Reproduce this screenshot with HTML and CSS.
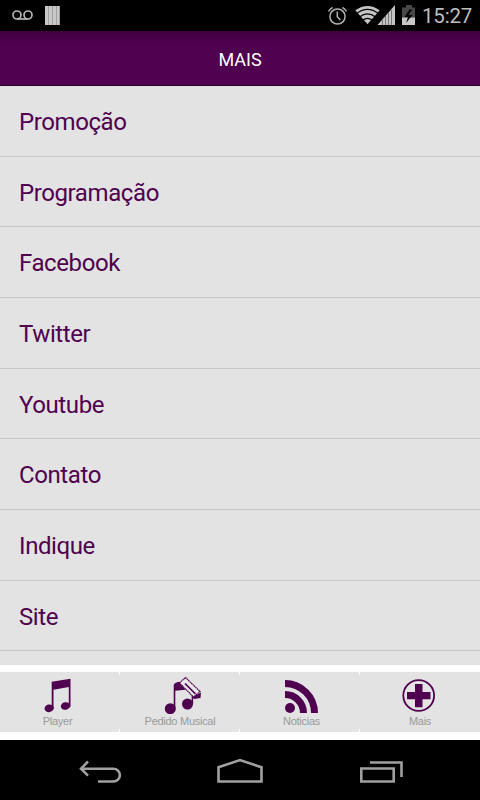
FILE: index.html
```html
<!DOCTYPE html>
<html lang="pt-BR">
	<head>
		<meta charset="utf-8">
		<title>Mais</title>
		<link rel="stylesheet" href="styles.css">
	</head>
	<body>
		<div class="status">
			<svg class="left" width="160" height="31" viewBox="0 0 160 31">
				<g fill="none" stroke="#b4b4b4" stroke-width="1.7">
					<circle cx="17" cy="15" r="4"/>
					<circle cx="28" cy="15" r="4"/>
					<path d="M17 19h11"/>
				</g>
				<path fill="#a0a0a0" d="M45 6h15v19H45z"/>
				<path fill="#c8c8c8" d="M45 6h3v19h-3zM49 6h3v19h-3zM53 6h3v19h-3zM57 6h2v19h-2z"/>
			</svg>
			<svg width="110" height="31" viewBox="310 0 110 31">
				<g fill="none" stroke="#b0b0b0" stroke-width="1.5">
					<circle cx="337.5" cy="16.5" r="7.6"/>
					<path d="M337.3 11.5v5.2l3 3.3M328.5 11.5q1.3-2.5 4-4M346.5 11.5q-1.3-2.5-4-4"/>
				</g>
				<!-- wifi -->
				<path fill="#c4c4c4" d="M367.5 24.2L355.3 10.3Q367.5 1.5 379.7 10.3z"/>
				<path fill="none" stroke="#000" stroke-width="1.2" d="M356.5 13.6q11-8.6 22 0M359.5 16.9q8-6 16 0M362.8 20q4.7-3.4 9.4 0"/>
				<!-- signal -->
				<path fill="#c4c4c4" d="M395 5v20h-17.5z"/>
				<path stroke="#777" stroke-width="1" d="M382.5 20v5M385.5 16v9M388.5 13v12M391.5 10v15"/>
				<!-- battery -->
				<path fill="#484848" d="M406 5h6v2.5h3v10h-13v-10h4z"/>
				<path fill="#c8c8c8" d="M402 17.5h13V25h-13z"/>
				<path fill="#000" d="M409.5 9.5l-5 7.5h3.5l-2 6 6.5-8h-4l3.5-5.5z"/>
			</svg>
			<span class="time">15:27</span>
		</div>
		<div class="header">MAIS</div>
		<ul class="list">
			<li>Promoção</li>
			<li>Programação</li>
			<li>Facebook</li>
			<li>Twitter</li>
			<li>Youtube</li>
			<li>Contato</li>
			<li>Indique</li>
			<li>Site</li>
		</ul>
		<div class="tabs">
			<div class="tab">
				<svg width="120" height="42" viewBox="0 672 120 42">
					<path fill="#4f004f" d="M51.7 681.7l18.8-3v28h-1.7V687l-15.3 2.7v18.5h-1.8z"/>
					<ellipse cx="49.2" cy="708.3" rx="4.7" ry="3.8" transform="rotate(-10 49.2 708.3)" fill="#4f004f"/>
					<ellipse cx="65.5" cy="706" rx="4.7" ry="3.8" transform="rotate(-10 65.5 706)" fill="#4f004f"/>
				</svg>
				<span>Player</span>
			</div>
			<div class="tab">
				<svg width="120" height="42" viewBox="120 672 120 42">
					<path fill="#4f004f" d="M173.7 708v-23q.5-2.5 5.8-3.3l6 8-10.2 1V708z"/>
					<path stroke="#4f004f" stroke-width="1.5" d="M192.4 695v9"/>
					<circle cx="170.3" cy="708.7" r="5.5" fill="#4f004f"/>
					<circle cx="187.5" cy="704" r="5.5" fill="#4f004f"/>
					<path fill="#4f004f" d="M201 692.5l-.5 5.500-6.500 1-2-2z"/>
					<path fill="#e9e9e9" stroke="#4f004f" stroke-width="1.2" stroke-dasharray="1.5 .5" d="M179.5 683l6-5.500 14.500 14-6.500 5.500z"/>
					<path fill="none" stroke="#4f004f" stroke-width="1.7" d="M185 683.5l10.500 10.500"/>
				</svg>
				<span class="pedido">Pedido Musical</span>
			</div>
			<div class="tab">
				<svg width="120" height="42" viewBox="240 672 120 42">
					<circle cx="290" cy="708" r="5" fill="#4f004f"/>
					<path fill="none" stroke="#4f004f" stroke-width="7" d="M285 694.5a18.500 18.500 0 0 1 18.500 18.500M285 683.500a29.500 29.500 0 0 1 29.500 29.500"/>
				</svg>
				<span class="noticias">Noticias</span>
			</div>
			<div class="tab">
				<svg width="120" height="42" viewBox="360 672 120 42">
					<circle cx="418.7" cy="695.5" r="15.4" fill="none" stroke="#4f004f" stroke-width="1.8"/>
					<path fill="#4f004f" d="M415 684h7.500v8h8v7.300h-8v8H415v-8h-8V692h8z"/>
				</svg>
				<span class="mais">Mais</span>
			</div>
		</div>
		<div class="navbar">
			<svg width="480" height="60" viewBox="0 740 480 60">
				<g fill="none" stroke="#a0a0a0" stroke-width="2.6">
					<path d="M98 781.5h15.500a6.400 6.400 0 0 0 0-12.800H81M88 761.500l-7 7.200 7 7"/>
					<path d="M218.5 781.5v-14.200l21.500-7.300 21.500 7.300v14.200z"/>
					<path d="M361.3 768.5h32.400v13h-32.400zM370 762.500h31.500V777"/>
				</g>
			</svg>
		</div>
	</body>
</html>
```

FILE: styles.css
```css
body, ul{
	margin: 0;
	padding: 0;
}
body{
	width: 480px;
	height: 800px;
	overflow: hidden;
	background: #000;
	font-family: Roboto, sans-serif;
}
svg{
	display: block;
}
.status{
	display: flex;
	height: 31px;
	background: #000;
}
.status .left{
	margin-right: 150px;
}
.time{
	padding-left: 2px;
	font-size: 20.5px;
	letter-spacing: -0.2px;
	line-height: 32px;
	color: #bebebe;
}
.header{
	box-sizing: border-box;
	height: 55px;
	border-bottom: 1px solid #2c002c;
	background: linear-gradient(#400040, #4f004f 12px);
	font-size: 18px;
	line-height: 57px;
	text-align: center;
	color: #fff;
}
.list{
	height: 579px;
	overflow: hidden;
	background: #e3e3e3;
	list-style: none;
}
.list li{
	box-sizing: border-box;
	height: 70.67px;
	padding-left: 19px;
	border-bottom: 1px solid #c8c8c8;
	font-size: 24px;
	letter-spacing: -0.4px;
	line-height: 72px;
	color: #4f004f;
}
.tabs{
	display: flex;
	box-sizing: border-box;
	height: 75px;
	padding: 7px 0 8px;
	background: #fff;
}
.tab{
	position: relative;
	width: 120px;
	background: #e3e3e3;
	font-family: "Liberation Sans", sans-serif;
	font-size: 11px;
	letter-spacing: -0.27px;
	line-height: 15px;
	text-align: center;
	color: #999;
}
.tab span{
	display: block;
	padding-right: 5px;
}
.tab .pedido{
	padding-right: 0;
}
.tab .noticias{
	padding-left: 3px;
	padding-right: 0;
}
.tab .mais{
	padding-right: 0;
}
/* notches between the tabs */
.tab + .tab::before, .tab + .tab::after{
	content: "";
	position: absolute;
	left: -1px;
	width: 1px;
	height: 3px;
	background: #fff;
}
.tab + .tab::before{
	top: 0;
}
.tab + .tab::after{
	bottom: 0;
}
.navbar{
	height: 60px;
	background: #000;
}
```
